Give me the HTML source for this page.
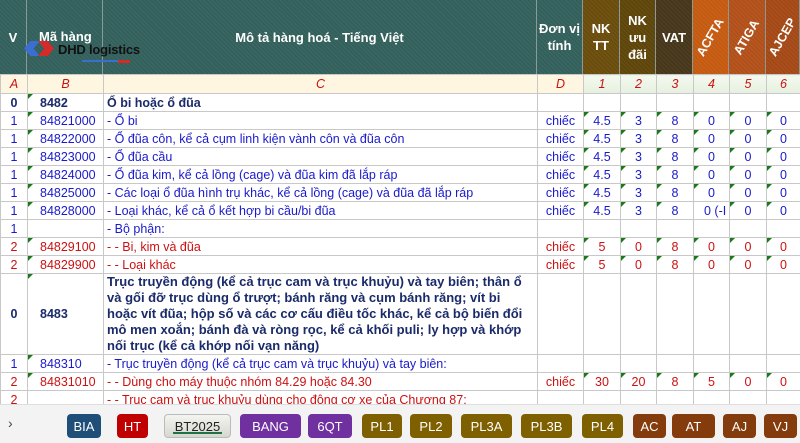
<!DOCTYPE html>
<html><head><meta charset="utf-8"><style>
*{margin:0;padding:0;box-sizing:border-box}
body{width:800px;height:443px;overflow:hidden;background:#fff;font-family:"Liberation Sans",Arial,sans-serif;position:relative}
.h{position:absolute;top:0;height:74px;color:#fff;font-weight:bold;font-size:13px;display:flex;align-items:center;justify-content:center;text-align:center;line-height:17px;border-right:1px solid #8a9a98;background-image:repeating-linear-gradient(45deg,rgba(255,255,255,.05) 0 1px,transparent 1px 3px)}
.t{background-color:#33605c}
.rot{transform:rotate(-60deg);white-space:nowrap;font-size:12.5px}
table{position:absolute;top:74px;left:0;border-collapse:collapse;table-layout:fixed;width:800px}
td{border:1px solid #c8c8c8;height:18px;font-size:12.5px;padding:0 3px;white-space:nowrap;overflow:hidden;color:#1a1acc;position:relative}
td.n{text-align:center}
td.k::before{content:"";position:absolute;left:0;top:0;border-top:5px solid #1a7a1a;border-right:5px solid transparent}
tr.r td{color:#cc1111}
tr.b td{color:#1a2a6a;font-weight:bold}
tr.l td{color:#cc1111;font-style:italic;text-align:center;height:19px;background:#fff6e2}
tr.l td.g{background:linear-gradient(#f4f9ef,#e6f0df)}
.tabs{position:absolute;left:0;top:404px;width:800px;height:39px;background:#f3f3f3;border-top:1px solid #ddd}
.tab{position:absolute;top:9px;height:24px;border-radius:4px;color:#fff;font-size:13px;display:flex;align-items:center;justify-content:center;font-family:"Liberation Sans Narrow","Liberation Sans",sans-serif}
.logo{position:absolute;z-index:5}
</style></head><body>
<div class="h t" style="left:0;width:27px">V</div>
<div class="h t" style="left:27px;width:76px;align-items:flex-start;padding-top:28px;justify-content:flex-start;padding-left:12px">Mã hàng</div>
<div class="h t" style="left:103px;width:434px">Mô tả hàng hoá - Tiếng Việt</div>
<div class="h t" style="left:537px;width:46px">Đơn vị<br>tính</div>
<div class="h" style="left:583px;width:37px;background-color:#6a4d0c">NK<br>TT</div>
<div class="h" style="left:620px;width:36px;background-color:#5e4509">NK<br>ưu<br>đãi</div>
<div class="h" style="left:656px;width:37px;background-color:#46361a">VAT</div>
<div class="h" style="left:693px;width:36px;background-color:#c55a11"><span class="rot">ACFTA</span></div>
<div class="h" style="left:729px;width:37px;background-color:#b2501a"><span class="rot">ATIGA</span></div>
<div class="h" style="left:766px;width:34px;background-color:#a44816"><span class="rot">AJCEP</span></div>
<div class="logo" style="left:24px;top:41px;width:16px;height:15px;background:#3a6ed0;clip-path:polygon(40% 0,100% 0,60% 50%,100% 100%,40% 100%,0 50%)"></div>
<div class="logo" style="left:38px;top:41px;width:16px;height:15px;background:#d42a2a;clip-path:polygon(0 0,60% 0,100% 50%,60% 100%,0 100%,40% 50%)"></div>
<div class="logo" style="left:58px;top:42px;color:#111;font-weight:bold;font-size:13px;font-family:'Liberation Sans Narrow','Liberation Sans',sans-serif;letter-spacing:-.2px;white-space:nowrap">DHD logistics</div>
<div class="logo" style="left:82px;top:60px;width:40px;height:2px;background:#3a6ed0"></div>
<div class="logo" style="left:118px;top:60px;width:12px;height:3px;background:#d42a2a"></div>
<table>
<colgroup><col style="width:27px"><col style="width:76px"><col style="width:434px"><col style="width:46px"><col style="width:37px"><col style="width:36px"><col style="width:37px"><col style="width:36px"><col style="width:37px"><col style="width:34px"></colgroup>
<tr class="l"><td>A</td><td>B</td><td>C</td><td>D</td><td class="g">1</td><td class="g">2</td><td class="g">3</td><td class="g">4</td><td class="g">5</td><td class="g">6</td></tr>
<tr class="b"><td class="n">0</td><td class="k" style="padding-left:12px">8482</td><td>Ổ bi hoặc ổ đũa</td><td></td><td></td><td></td><td></td><td></td><td></td><td></td></tr>
<tr><td class="n">1</td><td class="k" style="padding-left:12px">84821000</td><td>- Ổ bi</td><td class="n">chiếc</td><td class="n k">4.5</td><td class="n k">3</td><td class="n k">8</td><td class="n k">0</td><td class="n k">0</td><td class="n k">0</td></tr>
<tr><td class="n">1</td><td class="k" style="padding-left:12px">84822000</td><td>- Ổ đũa côn, kể cả cụm linh kiện vành côn và đũa côn</td><td class="n">chiếc</td><td class="n k">4.5</td><td class="n k">3</td><td class="n k">8</td><td class="n k">0</td><td class="n k">0</td><td class="n k">0</td></tr>
<tr><td class="n">1</td><td class="k" style="padding-left:12px">84823000</td><td>- Ổ đũa cầu</td><td class="n">chiếc</td><td class="n k">4.5</td><td class="n k">3</td><td class="n k">8</td><td class="n k">0</td><td class="n k">0</td><td class="n k">0</td></tr>
<tr><td class="n">1</td><td class="k" style="padding-left:12px">84824000</td><td>- Ổ đũa kim, kể cả lồng (cage) và đũa kim đã lắp ráp</td><td class="n">chiếc</td><td class="n k">4.5</td><td class="n k">3</td><td class="n k">8</td><td class="n k">0</td><td class="n k">0</td><td class="n k">0</td></tr>
<tr><td class="n">1</td><td class="k" style="padding-left:12px">84825000</td><td>- Các loại ổ đũa hình trụ khác, kể cả lồng (cage) và đũa đã lắp ráp</td><td class="n">chiếc</td><td class="n k">4.5</td><td class="n k">3</td><td class="n k">8</td><td class="n k">0</td><td class="n k">0</td><td class="n k">0</td></tr>
<tr><td class="n">1</td><td class="k" style="padding-left:12px">84828000</td><td>- Loại khác, kể cả ổ kết hợp bi cầu/bi đũa</td><td class="n">chiếc</td><td class="n k">4.5</td><td class="n k">3</td><td class="n k">8</td><td style="padding-left:10px">0 (-I</td><td class="n k">0</td><td class="n k">0</td></tr>
<tr><td class="n">1</td><td></td><td>- Bộ phận:</td><td></td><td></td><td></td><td></td><td></td><td></td><td></td></tr>
<tr class="r"><td class="n">2</td><td class="k" style="padding-left:12px">84829100</td><td>- - Bi, kim và đũa</td><td class="n">chiếc</td><td class="n k">5</td><td class="n k">0</td><td class="n k">8</td><td class="n k">0</td><td class="n k">0</td><td class="n k">0</td></tr>
<tr class="r"><td class="n">2</td><td class="k" style="padding-left:12px">84829900</td><td>- - Loại khác</td><td class="n">chiếc</td><td class="n k">5</td><td class="n k">0</td><td class="n k">8</td><td class="n k">0</td><td class="n k">0</td><td class="n k">0</td></tr>
<tr class="b"><td class="n" style="height:81px">0</td><td class="k" style="padding-left:12px">8483</td><td style="white-space:normal;line-height:16px;padding:0 8px 0 3px;font-size:13px">Trục truyền động (kể cả trục cam và trục khuỷu) và tay biên; thân ổ và gối đỡ trục dùng ổ trượt; bánh răng và cụm bánh răng; vít bi hoặc vít đũa; hộp số và các cơ cấu điều tốc khác, kể cả bộ biến đổi mô men xoắn; bánh đà và ròng rọc, kể cả khối puli; ly hợp và khớp nối trục (kể cả khớp nối vạn năng)</td><td></td><td></td><td></td><td></td><td></td><td></td><td></td></tr>
<tr><td class="n">1</td><td class="k" style="padding-left:12px">848310</td><td>- Trục truyền động (kể cả trục cam và trục khuỷu) và tay biên:</td><td></td><td></td><td></td><td></td><td></td><td></td><td></td></tr>
<tr class="r"><td class="n">2</td><td class="k" style="padding-left:12px">84831010</td><td>- - Dùng cho máy thuộc nhóm 84.29 hoặc 84.30</td><td class="n">chiếc</td><td class="n k">30</td><td class="n k">20</td><td class="n k">8</td><td class="n k">5</td><td class="n k">0</td><td class="n k">0</td></tr>
<tr class="r"><td class="n">2</td><td></td><td>- - Trục cam và trục khuỷu dùng cho động cơ xe của Chương 87:</td><td></td><td></td><td></td><td></td><td></td><td></td><td></td></tr>
</table>
<div class="tabs">
<div style="position:absolute;left:8px;top:10px;font-size:14px;color:#444">›</div>
<div class="tab" style="left:67px;width:34px;background:#1f4e79">BIA</div>
<div class="tab" style="left:117px;width:31px;background:#c00000">HT</div>
<div class="tab" style="left:164px;width:67px;background:linear-gradient(#f4f4f0,#d6d8d0);color:#222;border:1px solid #bbb">BT2025<div style="position:absolute;left:8px;right:8px;bottom:3px;height:2px;background:#217346"></div></div>
<div class="tab" style="left:240px;width:61px;background:#7030a0">BANG</div>
<div class="tab" style="left:308px;width:44px;background:#7030a0">6QT</div>
<div class="tab" style="left:362px;width:40px;background:#7f6000">PL1</div>
<div class="tab" style="left:410px;width:42px;background:#7f6000">PL2</div>
<div class="tab" style="left:461px;width:51px;background:#7f6000">PL3A</div>
<div class="tab" style="left:521px;width:51px;background:#7f6000">PL3B</div>
<div class="tab" style="left:582px;width:41px;background:#7f6000">PL4</div>
<div class="tab" style="left:633px;width:33px;background:#843c0c">AC</div>
<div class="tab" style="left:672px;width:43px;background:#843c0c">AT</div>
<div class="tab" style="left:723px;width:33px;background:#843c0c">AJ</div>
<div class="tab" style="left:764px;width:33px;background:#843c0c">VJ</div>
</div>
</body></html>
